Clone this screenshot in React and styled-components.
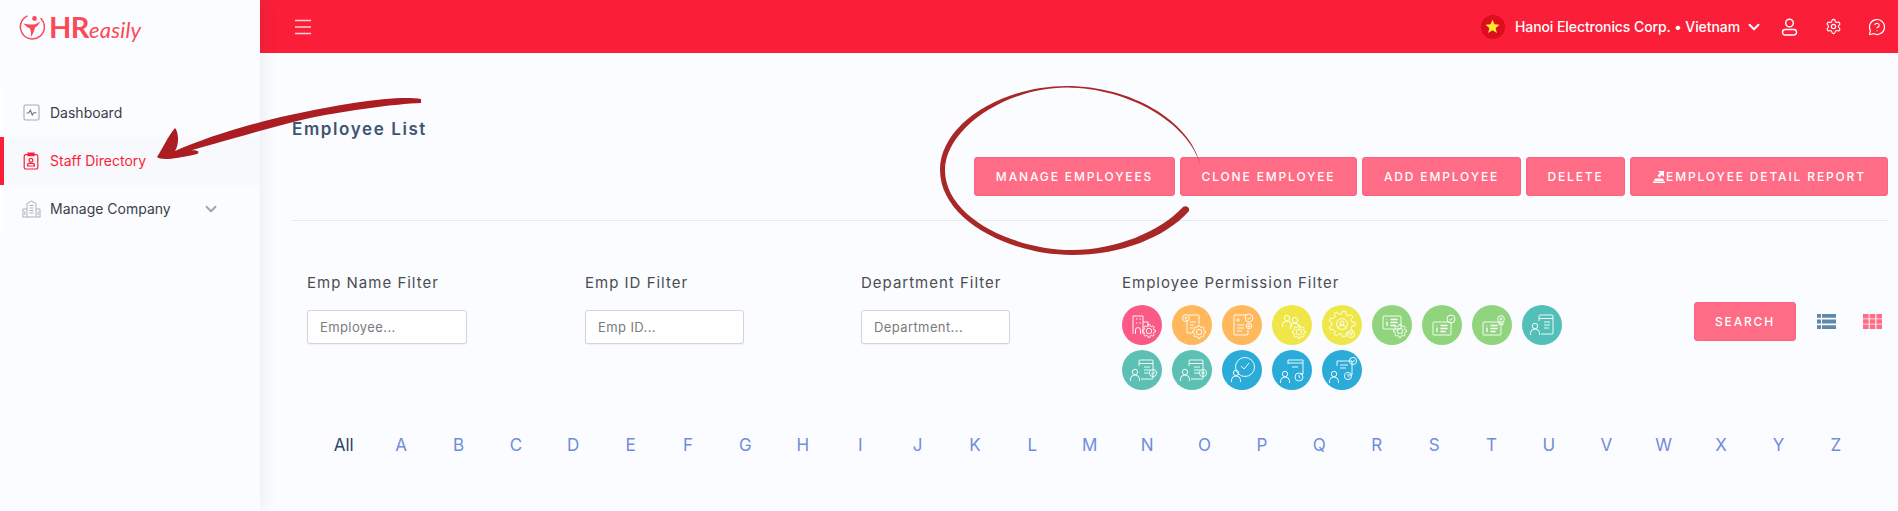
import React from "react";
import styled, { createGlobalStyle } from "styled-components";
import { Settings, MessageCircleQuestion, ChevronDown } from "lucide-react";

const GlobalStyle = createGlobalStyle`
  html, body {
    margin: 0;
    padding: 0;
    height: 100%;
    overflow: hidden;
    background: #fbfcff;
    font-family: "Inter", "Liberation Sans", sans-serif;
  }
  * { box-sizing: border-box; }
`;

const Page = styled.div`
  position: relative;
  display: flex;
  width: 1898px;
  height: 511px;
  overflow: hidden;
  background: #fbfcff;
`;

const Sidebar = styled.aside`
  flex: 0 0 260px;
  position: relative;
  z-index: 1;
  background: #fbfcff;
  box-shadow: 4px 0 14px rgba(40, 50, 90, 0.07);
`;

const LogoRow = styled.div`
  display: flex;
  align-items: center;
  gap: 4px;
  height: 53px;
  padding-left: 19px;
`;

const LogoText = styled.div`
  font-family: "Lato", "Liberation Sans", sans-serif;
  font-size: 29px;
  line-height: 1;
  font-weight: 700;
  color: #fb4a57;
  letter-spacing: -0.5px;

  em {
    font-weight: 400;
    font-size: 22px;
    letter-spacing: 0.2px;
  }
`;

const Nav = styled.nav`
  margin-top: 36px;
`;

const NavItem = styled.div`
  display: flex;
  align-items: center;
  height: 48px;
  padding: 0 0 1px 21px;
  border-left: 4px solid ${(p) => (p.$active ? "#fa1e38" : "#ffffff")};
  background: ${(p) => (p.$active ? "#f8f9fd" : "transparent")};
  color: ${(p) => (p.$active ? "#fa1e38" : "#3b4048")};
  font-size: 14px;
  position: relative;
`;

const NavIcon = styled.span`
  display: flex;
  justify-content: center;
  width: 20px;
  margin-left: -4px;
  margin-right: 9px;
`;

const NavChevron = styled.span`
  display: flex;
  margin-left: 31px;
  color: #9aa3af;
`;

const Main = styled.main`
  flex: 1;
  min-width: 0;
  display: flex;
  flex-direction: column;
`;

const Header = styled.header`
  display: flex;
  align-items: center;
  height: 53px;
  padding: 0 11px 0 35px;
  background: #fa1e38;
  color: #fff;
`;

const MenuIcon = styled.svg`
  width: 16px;
  height: 16px;
  opacity: 0.8;
`;

const HeaderRight = styled.div`
  margin-left: auto;
  display: flex;
  align-items: center;
`;

const Flag = styled.span`
  display: flex;
  align-items: center;
  justify-content: center;
  width: 24px;
  height: 24px;
  margin-right: 10px;
  border-radius: 50%;
  background: #dc0d1c;
`;

const Company = styled.span`
  font-size: 14px;
  font-weight: 500;
  letter-spacing: -0.08px;
  margin-right: 5px;
`;

const HeaderBtn = styled.span`
  display: flex;
  justify-content: center;
  width: 20px;
  margin-left: ${(p) => p.$gap}px;
`;

const Content = styled.div`
  padding: 0 10px 0 32px;
`;

const TopBar = styled.div`
  display: flex;
  justify-content: space-between;
  height: 168px;
  padding-bottom: 24px;
  border-bottom: 1px solid #e8e9ec;
`;

const Title = styled.h1`
  margin: 65px 0 0;
  font-family: "Inter", sans-serif;
  font-size: 17px;
  line-height: 22px;
  font-weight: 600;
  letter-spacing: 1.6px;
  color: #3f5570;
`;

const Actions = styled.div`
  display: flex;
  align-items: flex-end;
  gap: 5px;
`;

const Button = styled.button`
  display: flex;
  align-items: center;
  justify-content: center;
  width: ${(p) => p.$w}px;
  height: 39px;
  padding: 0;
  border: 1px solid #fb6480;
  border-radius: 3px;
  background: #ff6c86;
  color: #fff;
  font-family: "Inter", sans-serif;
  font-size: 12px;
  font-weight: 500;
  letter-spacing: 1.85px;
`;

const FilterRow = styled.div`
  display: flex;
  padding: 52px 0 0 15px;
`;

const FilterGroup = styled.div`
  flex: 0 0 ${(p) => p.$w}px;
`;

const FilterLabel = styled.div`
  font-family: "Inter", sans-serif;
  font-size: 15px;
  line-height: 20px;
  letter-spacing: 1px;
  color: #4a4d52;
`;

const FilterInput = styled.input`
  display: block;
  width: ${(p) => p.$w}px;
  height: 34px;
  margin-top: 17px;
  padding: 0 12px;
  border: 1px solid #d3d4d7;
  border-radius: 3px;
  background: #fff;
  box-shadow: 0 1px 1px rgba(0, 0, 0, 0.05);
  font-family: "Inter", sans-serif;
  font-size: 13px;
  letter-spacing: 0.4px;

  &::placeholder { color: #777b80; opacity: 1; }
`;

const PermGrid = styled.div`
  display: flex;
  flex-wrap: wrap;
  gap: 5px 10px;
  width: 440px;
  margin-top: 12px;
`;

const PermCircle = styled.span`
  display: block;
  width: 40px;
  height: 40px;
  border-radius: 50%;
  background: ${(p) => p.$bg};
`;

const SearchBox = styled.div`
  display: flex;
  align-items: center;
  margin-top: 29px;
  height: 39px;
`;

const ViewIcon = styled.svg`
  width: 19px;
  height: 15px;
  margin-left: ${(p) => p.$gap}px;
`;

const Alphabet = styled.div`
  display: grid;
  grid-template-columns: repeat(27, 57.4px);
  align-items: center;
  height: 30px;
  margin: 40px 0 0 23px;
`;

const Letter = styled.span`
  text-align: center;
  font-size: 17px;
  color: ${(p) => (p.$active ? "#2f4462" : "#708cdc")};
`;

const Annotation = styled.svg`
  position: absolute;
  left: 0;
  top: 0;
  z-index: 2;
  pointer-events: none;
`;

// toothed outline for the small gears in the permission badges
const gearPath = (cx, cy, r, teeth = 8) => {
  const pts = [];
  const step = (Math.PI * 2) / teeth;
  for (let i = 0; i < teeth; i++) {
    const a = i * step;
    [
      [-0.32, 0.78],
      [-0.18, 1],
      [0.18, 1],
      [0.32, 0.78],
    ].forEach(([off, k]) => {
      const t = a + off * step;
      pts.push(`${(cx + Math.cos(t) * r * k).toFixed(2)},${(cy + Math.sin(t) * r * k).toFixed(2)}`);
    });
  }
  return `M${pts.join("L")}Z`;
};

const Gear = ({ x, y, r = 6.5, teeth = 8 }) => (
  <>
    <path d={gearPath(x, y, r, teeth)} />
    <circle cx={x} cy={y} r={r * 0.42} />
  </>
);

const Person = ({ x, y }) => (
  <>
    <circle cx={x} cy={y} r="2.7" />
    <path d={`M${x - 4.5} ${y + 9}v-2.2a4 4 0 0 1 4-3.6h1a4 4 0 0 1 4 3.6v2.2`} />
  </>
);

const Badge = ({ x, y, r = 3.6, kind = "check" }) => (
  <>
    <circle cx={x} cy={y} r={r} />
    {kind === "check" && <path d={`M${x - 1.6} ${y}l1.2 1.3 2.2-2.4`} />}
    {kind === "plus" && <path d={`M${x - 1.6} ${y}h3.2M${x} ${y - 1.6}v3.2`} />}
    {kind === "dot" && <circle cx={x} cy={y} r="1.1" />}
    {kind === "clock" && <path d={`M${x} ${y - 2}v2l1.5 1`} />}
  </>
);

const Card = ({ x, y }) => (
  <>
    <rect x={x} y={y} width="18" height="13" rx="1" />
    <path d={`M${x + 4} ${y + 3.2}v.6M${x + 4} ${y + 5.5}v4.5M${x + 7.5} ${y + 3.5}h7M${x + 7.5} ${y + 6.5}h7M${x + 7.5} ${y + 9.5}h5`} strokeWidth="1.3" />
  </>
);

const Sheet = () => (
  <>
    <path d="M17 16v-5a1 1 0 0 1 1-1h12a1 1 0 0 1 1 1v17a1 1 0 0 1-1 1H19" />
    <path d="M17 13.5h14M22 17h6M22 20h6M22 23h5" />
  </>
);

const permIcons = [
  { bg: "#fb5a86", art: <><path d="M11 29V11h10v18M21 17h5v5" /><path d="M14 14h1.5M17.5 14H19M14 18h1.5M17.5 18H19" /><path d="M13.5 29v-4a2.5 2.5 0 0 1 5 0v4" /><Gear x={27} y={26} /></> },
  { bg: "#ffb95c", art: <><path d="M17 10h9a1 1 0 0 1 1 1v8M20 28h-5v-13" /><path d="M18 17h6M18 20h4M18 23h3" /><Badge x={14} y={13} r={3.4} kind="plus" /><Gear x={27} y={27} /></> },
  { bg: "#ffb95c", art: <><path d="M24 10H13a1 1 0 0 0-1 1v18a1 1 0 0 0 1 1h12a1 1 0 0 0 1-1v-4" /><circle cx="16" cy="15" r="1.2" /><path d="M15 20h7M15 23h7M15 26h5" /><Badge x={27} y={13} r={4} /><Badge x={27} y={21} r={2.8} kind="dot" /></> },
  { bg: "#efe748", art: <><Person x={15} y={13} /><Person x={23} y={15} /><Gear x={27} y={27} /></> },
  { bg: "#efe748", art: <><Gear x={20} y={19} r={13} teeth={9} /><path d="M16 24a4 4 0 0 1 8 0" /><circle cx="20" cy="18" r="2" /><Badge x={29} y={29} r={3.6} /></> },
  { bg: "#90d47e", art: <><Card x={11} y={11} /><Gear x={28} y={26} /></> },
  { bg: "#90d47e", art: <><Card x={11} y={17} /><Badge x={29} y={14} r={4} /></> },
  { bg: "#90d47e", art: <><Card x={11} y={17} /><Badge x={29} y={14} r={3.4} kind="dot" /><path d="M27 17v3l2-1 2 1v-3" /></> },
  { bg: "#52c0b8", art: <><Sheet /><Person x={13} y={21} /></> },
  { bg: "#5cc1b4", art: <><Sheet /><Person x={13} y={22} /><Badge x={31} y={23} r={3.6} /></> },
  { bg: "#5cc1b4", art: <><Sheet /><Person x={13} y={22} /><Badge x={31} y={23} r={3.6} kind="dot" /></> },
  { bg: "#2babd8", art: <><circle cx="23" cy="17" r="9.5" /><path d="M19 16l3 3 5-6" /><Person x={14} y={23} /></> },
  { bg: "#2babd8", art: <><path d="M16 14v-4h15v14h-3M16 13h15M20 17h6" /><Person x={13} y={24} /><Badge x={27} y={27} r={4} kind="clock" /></> },
  { bg: "#2babd8", art: <><path d="M15 16v-5h15v14h-3M18 15h8M18 18h6" /><Person x={12} y={24} /><Badge x={26} y={26} r={3.6} kind="clock" /><Badge x={31} y={11} r={3.6} /></> },
];

const Logo = () => (
  <svg width="26" height="26" viewBox="0 0 26 26" fill="none">
    <path d="M8 2.2A12 12 0 1 0 22 4.6" stroke="#fb4a57" strokeWidth="1.5" strokeLinecap="round" />
    <circle cx="15.5" cy="4.5" r="2.4" fill="#fb4a57" />
    <path d="M4.5 9.5c4 1 7 1.2 9.5 1 3 0 5-1.2 7.5-3.5-1.5 3.5-3.5 5.4-5.5 6.5-.5 3-1.8 6-4 9.5.2-3 0-6-1-8.5-2.2-1-4.5-2.6-6.5-5Z" fill="#fb4a57" />
  </svg>
);

const DashboardIcon = () => (
  <svg width="17" height="17" viewBox="0 0 17 17" fill="none" stroke="#a3abb5" strokeWidth="1.1">
    <rect x="1" y="1" width="15" height="15" rx="1.5" />
    <path d="M3.5 9h2.3l1.5-3 2 5 1.4-2.2h2.8" stroke="#6f7782" />
  </svg>
);

const StaffIcon = () => (
  <svg width="16" height="18" viewBox="0 0 16 18" fill="none" stroke="#fa1e38" strokeWidth="1.2">
    <rect x="1.2" y="2.6" width="13.6" height="14.4" rx="1.6" />
    <path d="M5 1.2h6v2.4H5z" fill="#fa1e38" />
    <circle cx="8" cy="8.2" r="1.9" />
    <path d="M4.6 14v-.8c0-1.2 1-1.8 2-1.8h2.8c1 0 2 .6 2 1.8v.8z" />
  </svg>
);

const CompanyIcon = () => (
  <svg width="19" height="18" viewBox="0 0 19 18" fill="none" stroke="#a9b1ba" strokeWidth="1">
    <path d="M5 17V3.5L9.5 1 14 3.5V17M1 17V9h4M14 9h4v8M.5 17h18" />
    <path d="M7.5 5.5h4M7.5 8h4M7.5 10.5h4M7.5 13h4M2.8 11.5v3.5M16.2 11.5v3.5" />
  </svg>
);

const UserIcon = () => (
  <svg width="17" height="18" viewBox="0 0 17 18" fill="none" stroke="#fff" strokeWidth="1.4">
    <circle cx="8.5" cy="5" r="3.8" />
    <rect x="1.5" y="11.5" width="14" height="5.5" rx="2.7" />
  </svg>
);

const ReportIcon = () => (
  <svg width="14" height="13" viewBox="0 0 14 13" fill="#fff">
    <path d="M1 11.5h12V13H1zM3 8.5h8l1 2.4H2z" />
    <path d="M6 1h6v6l-2-2-2.6 2.6L5.4 5.6 8 3z" />
  </svg>
);

const actions = [
  { label: "MANAGE EMPLOYEES", w: 201 },
  { label: "CLONE EMPLOYEE", w: 177 },
  { label: "ADD EMPLOYEE", w: 159 },
  { label: "DELETE", w: 99 },
  { label: "EMPLOYEE DETAIL REPORT", w: 258, icon: <ReportIcon /> },
];

const letters = ["All", ..."ABCDEFGHIJKLMNOPQRSTUVWXYZ"];

const App = () => {
  return (
    <Page>
      <GlobalStyle />
      <Sidebar>
        <LogoRow>
          <Logo />
          <LogoText>
            HR<em>easily</em>
          </LogoText>
        </LogoRow>
        <Nav>
          <NavItem>
            <NavIcon><DashboardIcon /></NavIcon>
            Dashboard
          </NavItem>
          <NavItem $active>
            <NavIcon><StaffIcon /></NavIcon>
            Staff Directory
          </NavItem>
          <NavItem>
            <NavIcon><CompanyIcon /></NavIcon>
            Manage Company
            <NavChevron><ChevronDown size={18} strokeWidth={2.4} /></NavChevron>
          </NavItem>
        </Nav>
      </Sidebar>

      <Main>
        <Header>
          <MenuIcon viewBox="0 0 16 16" fill="none" stroke="#fff" strokeWidth="1.5">
            <path d="M0 1.5h16M0 8h16M0 14.5h16" />
          </MenuIcon>
          <HeaderRight>
            <Flag>
              <svg width="15" height="15" viewBox="0 0 24 24" fill="#ffe92e">
                <path d="M12 1l3.2 7.4 8 .7-6.1 5.3 1.9 7.8L12 18l-7 4.2 1.9-7.8L.8 9.1l8-.7z" />
              </svg>
            </Flag>
            <Company>Hanoi Electronics Corp. • Vietnam</Company>
            <ChevronDown size={18} strokeWidth={2.6} />
            <HeaderBtn $gap={16}><UserIcon /></HeaderBtn>
            <HeaderBtn $gap={24}><Settings size={17} strokeWidth={1.6} /></HeaderBtn>
            <HeaderBtn $gap={24}><MessageCircleQuestion size={18} strokeWidth={1.6} /></HeaderBtn>
          </HeaderRight>
        </Header>

        <Content>
          <TopBar>
            <Title>Employee List</Title>
            <Actions>
              {actions.map((a) => (
                <Button key={a.label} $w={a.w}>
                  {a.icon}
                  {a.label}
                </Button>
              ))}
            </Actions>
          </TopBar>

          <FilterRow>
            <FilterGroup $w={278}>
              <FilterLabel>Emp Name Filter</FilterLabel>
              <FilterInput $w={160} placeholder="Employee..." />
            </FilterGroup>
            <FilterGroup $w={276}>
              <FilterLabel>Emp ID Filter</FilterLabel>
              <FilterInput $w={159} placeholder="Emp ID..." />
            </FilterGroup>
            <FilterGroup $w={261}>
              <FilterLabel>Department Filter</FilterLabel>
              <FilterInput $w={149} placeholder="Department..." />
            </FilterGroup>
            <FilterGroup $w={572}>
              <FilterLabel>Employee Permission Filter</FilterLabel>
              <PermGrid>
                {permIcons.map((icon, i) => (
                  <PermCircle key={i} $bg={icon.bg}>
                    <svg width="40" height="40" viewBox="0 0 40 40" fill="none" stroke="#fff" strokeWidth="0.9">
                      {icon.art}
                    </svg>
                  </PermCircle>
                ))}
              </PermGrid>
            </FilterGroup>
            <SearchBox>
              <Button $w={102}>SEARCH</Button>
              <ViewIcon $gap={21} viewBox="0 0 19 15" fill="#5f88ab">
                <path d="M0 0h4v3.8H0zM5 0h14v3.8H5zM0 5.6h4v3.8H0zM5 5.6h14v3.8H5zM0 11.2h4V15H0zM5 11.2h14V15H5z" />
              </ViewIcon>
              <ViewIcon $gap={27} viewBox="0 0 19 15" fill="#ff6c86">
                <path d="M0 0h5.6v4.4H0zM6.7 0h5.6v4.4H6.7zM13.4 0H19v4.4h-5.6zM0 5.3h5.6v4.4H0zM6.7 5.3h5.6v4.4H6.7zM13.4 5.3H19v4.4h-5.6zM0 10.6h5.6V15H0zM6.7 10.6h5.6V15H6.7zM13.4 10.6H19V15h-5.6z" />
              </ViewIcon>
            </SearchBox>
          </FilterRow>

          <Alphabet>
            {letters.map((l) => (
              <Letter key={l} $active={l === "All"}>{l}</Letter>
            ))}
          </Alphabet>
        </Content>
      </Main>

      <Annotation width="1898" height="511" viewBox="0 0 1898 511">
        <path
          d="M421 99C398 95 345 103 290 115C245 125 205 138 175 151C180 143 178 131 175 128C168 136 163 148 157 157C160 160 172 160 197 154C200 152 198 150 192 150C186 150 182 152 176 154C210 146 262 129 310 118C350 110 395 104 421 103Z"
          fill="#ab1c23"
        />
        <path
          d="M1200.5 165C1190 120 1130 86 1067 86C1000 86 940 125 940 170C940 220 1010 255 1072 255C1120 255 1165 238 1189 211C1190 207 1186 205 1183 207C1160 232 1115 250 1072 250C1015 250 945 218 945 170C945 130 1003 88 1067 87.5C1128 88 1188 122 1200.5 165Z"
          fill="#a82828"
        />
      </Annotation>
    </Page>
  );
};

export default App;
